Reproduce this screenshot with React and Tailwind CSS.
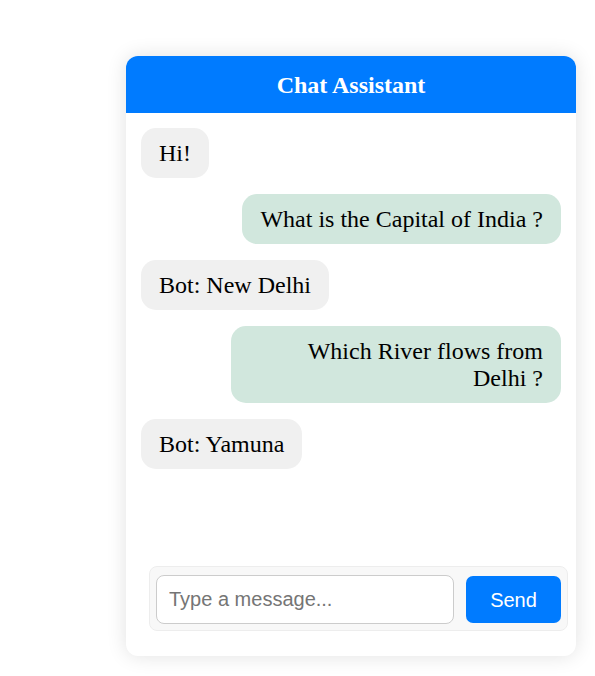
const messages = [
  { from: 'bot', text: 'Hi!' },
  { from: 'user', text: 'What is the Capital of India ?' },
  { from: 'bot', text: 'Bot: New Delhi' },
  { from: 'user', text: 'Which River flows from Delhi ?' },
  { from: 'bot', text: 'Bot: Yamuna' },
];

export default function App() {
  return (
    <div className="min-h-screen bg-white pt-[56px] pl-[126px]">
      <div className="w-[450px] h-[600px] flex flex-col rounded-[12px] bg-white overflow-hidden shadow-[0_0_20px_rgba(0,0,0,0.12)]">
        {/* header */}
        <div className="h-[57px] shrink-0 bg-[#007bff] flex items-center justify-center">
          <h2 className="text-white font-bold text-[24px] font-['Liberation_Serif',serif]">Chat Assistant</h2>
        </div>

        {/* messages */}
        <div className="flex-1 flex flex-col gap-4 px-[15px] pt-[15px] font-['Liberation_Serif',serif] text-[24px] text-black">
          {messages.map((m, i) => (
            <div
              key={i}
              className={
                m.from === 'user'
                  ? 'self-end max-w-[330px] text-right bg-[#d1e7dd] rounded-[15px] px-[18px] py-[11.5px] leading-[27px]'
                  : 'self-start bg-[#f0f0f0] rounded-[15px] px-[18px] py-[11.5px] leading-[27px]'
              }
            >
              {m.text}
            </div>
          ))}
        </div>

        {/* input row */}
        <div className="ml-[23px] mr-[8px] mb-[25px] flex items-center gap-3 bg-[#f8f8f8] border border-[#ededed] rounded-[8px] pl-[6px] pr-[6px] pt-[8px] pb-[6px]">
          <input
            type="text"
            placeholder="Type a message..."
            className="w-[298px] h-[49px] border border-[#cccccc] rounded-[8px] bg-white px-3 text-[20px] font-['Liberation_Sans',Arial,sans-serif] placeholder:text-[#757575] outline-none"
          />
          <button className="w-[95px] h-[47px] bg-[#007bff] text-white rounded-[7px] text-[20px] font-['Liberation_Sans',Arial,sans-serif]">
            Send
          </button>
        </div>
      </div>
    </div>
  );
}
